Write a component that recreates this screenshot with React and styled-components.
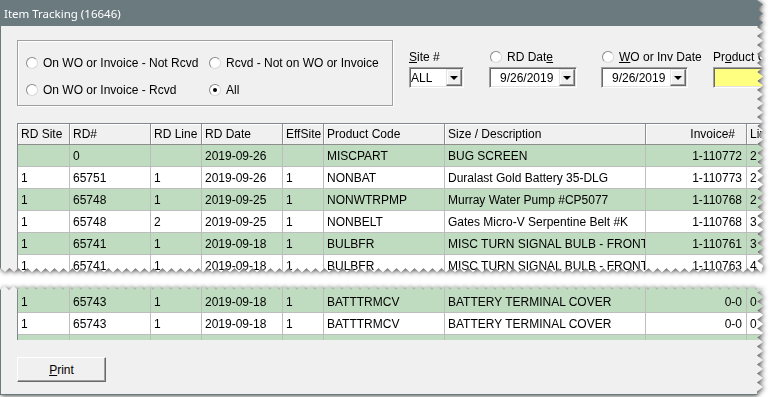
import React from 'react';
import styled, { createGlobalStyle } from 'styled-components';

const Global = createGlobalStyle`
  html, body { margin: 0; padding: 0; background: #ffffff; }
  body {
    overflow: hidden;
    font-family: "Liberation Sans", Arial, sans-serif;
    font-size: 12px;
    color: #000;
  }
`;

const FRAME = '#6b7a7f';
const R_IN = 757;
const R_OUT = 763;

function topClip(h) {
  const pts = [`0px 0px`];
  let i = 0;
  for (let y = 0; y <= h - 4; y += 4.5, i++) pts.push(`${i % 2 ? R_OUT : R_IN}px ${y}px`);
  let j = 0;
  for (let x = 761; x >= 0; x -= 4.5, j++) pts.push(`${x}px ${j % 2 ? h - 5 : h - 1}px`);
  pts.push(`0px ${h - 3}px`);
  return `polygon(${pts.join(',')})`;
}

function bottomClip(h) {
  const pts = [`0px 2px`];
  let j = 0;
  for (let x = 0; x <= 758; x += 4.5, j++) pts.push(`${x}px ${j % 2 ? 0 : 4}px`);
  let i = 0;
  for (let y = 2; y <= h; y += 4.5, i++) pts.push(`${i % 2 ? R_IN : R_OUT}px ${y}px`);
  pts.push(`${R_IN}px ${h}px`);
  pts.push(`0px ${h}px`);
  return `polygon(${pts.join(',')})`;
}

const TOP_H = 273;
const BOTTOM_H = 109;

const Stage = styled.div`
  width: 770px;
  height: 397px;
  display: flex;
  flex-direction: column;
  filter: drop-shadow(1px 1px 2.5px rgba(0, 0, 0, 0.7));
`;

const TopPiece = styled.div`
  height: ${TOP_H}px;
  flex: none;
  overflow: hidden;
  clip-path: ${topClip(TOP_H)};
  display: flex;
  flex-direction: column;
  width: 780px;
`;

const Tear = styled.div`
  height: 13px;
  flex: none;
`;

const BottomPiece = styled.div`
  height: ${BOTTOM_H}px;
  flex: none;
  overflow: hidden;
  clip-path: ${bottomClip(BOTTOM_H)};
  width: 780px;
  box-sizing: border-box;
  background: #f0f0f0;
  border-left: 1px solid ${FRAME};
  border-bottom: 1px solid ${FRAME};
  padding-left: 16px;
  display: flex;
  flex-direction: column;
`;

const TitleBar = styled.div`
  height: 26px;
  flex: none;
  background: ${FRAME};
  color: #fff;
  font-family: "Noto Sans", "Liberation Sans", sans-serif;
  font-size: 11.5px;
  display: flex;
  align-items: center;
  padding-left: 4px;
`;

const Body = styled.div`
  flex: 1;
  background: #f0f0f0;
  border-left: 1px solid ${FRAME};
  padding: 14px 0 0 16px;
  display: flex;
  flex-direction: column;
`;

const FilterRow = styled.div`
  display: flex;
  align-items: flex-start;
  height: 66px;
  flex: none;
`;

const GroupBox = styled.div`
  width: 376px;
  height: 66px;
  flex: none;
  box-sizing: border-box;
  border: 1px solid #a0a0a0;
  box-shadow: inset 1px 1px 0 #fff, 1px 1px 0 #fff;
  padding: 8px 0 0 8px;
  display: grid;
  grid-template-columns: 183px auto;
  grid-auto-rows: 27px;
`;

const RadioItem = styled.label`
  display: flex;
  align-items: center;
  gap: 5px;
  white-space: nowrap;
`;

const RadioDot = styled.span`
  width: 12px;
  height: 12px;
  box-sizing: border-box;
  border-radius: 50%;
  background: #fff;
  border: 1px solid;
  border-color: #8a8a8a #d8d8d8 #d8d8d8 #8a8a8a;
  display: inline-flex;
  align-items: center;
  justify-content: center;
  flex: none;
  margin-left: ${p => p.$inset || 0}px;
  &::after {
    content: '';
    width: 4px;
    height: 4px;
    border-radius: 50%;
    background: ${p => (p.$on ? '#000' : 'transparent')};
  }
`;

const Field = styled.div`
  display: flex;
  flex-direction: column;
  flex: none;
  margin-left: ${p => p.$gap}px;
  margin-top: 10px;
  width: ${p => p.$w}px;
`;

const FieldLabel = styled.div`
  height: 14px;
  line-height: 14px;
  display: flex;
  align-items: center;
  gap: 5px;
  white-space: nowrap;
`;

const Combo = styled.div`
  margin-top: 3px;
  height: 21px;
  box-sizing: border-box;
  background: ${p => p.$bg || '#fff'};
  border: 1px solid;
  border-color: #a0a0a0 #fff #fff #a0a0a0;
  box-shadow: inset 1px 1px 0 #696969, inset -1px -1px 0 #e3e3e3;
  display: flex;
  align-items: center;
  padding: 1px 1px 1px ${p => p.$pad}px;
  width: ${p => p.$w}px;
  flex: none;
`;

const ComboText = styled.span`
  flex: 1;
  white-space: nowrap;
`;

const DropButton = styled.span`
  width: 16px;
  height: 17px;
  box-sizing: border-box;
  background: #f0f0f0;
  border: 1px solid;
  border-color: #e3e3e3 #696969 #696969 #e3e3e3;
  box-shadow: inset -1px -1px 0 #a0a0a0, inset 1px 1px 0 #fff;
  display: flex;
  align-items: center;
  justify-content: center;
  flex: none;
  &::after {
    content: '';
    border-left: 4px solid transparent;
    border-right: 4px solid transparent;
    border-top: 4px solid #000;
    margin-top: 1px;
  }
`;

const COLS = '52px 81px 51px 81px 41px 121px 201px 101px 80px';

const GridFrame = styled.div`
  margin-top: 17px;
  border-left: 1px solid #828790;
  border-top: 1px solid #828790;
  width: 830px;
  flex: none;
`;

const Row = styled.div`
  display: grid;
  grid-template-columns: ${COLS};
`;

const HeadCell = styled.div`
  height: 21px;
  box-sizing: border-box;
  background: #f0f0f0;
  border-right: 1px solid #8e8e8e;
  border-bottom: 1px solid #8e8e8e;
  box-shadow: inset 1px 1px 0 #fff;
  display: flex;
  align-items: center;
  justify-content: ${p => (p.$right ? 'flex-end' : 'flex-start')};
  padding: 0 ${p => (p.$right ? 11 : 0)}px 0 3px;
  white-space: nowrap;
  overflow: hidden;
`;

const Cell = styled.div`
  height: ${p => 22 + (p.$lead || 0)}px;
  box-sizing: border-box;
  background: ${p => (p.$green ? '#c0dcc0' : '#ffffff')};
  border-right: 1px solid #bdbdbd;
  border-bottom: 1px solid #bdbdbd;
  display: flex;
  align-items: center;
  justify-content: ${p => (p.$right ? 'flex-end' : 'flex-start')};
  padding: ${p => p.$lead || 0}px ${p => (p.$right ? 4 : 0)}px 0 3px;
  white-space: nowrap;
  overflow: hidden;
`;

const LowerGrid = styled.div`
  height: 54px;
  overflow: hidden;
  border-left: 1px solid #828790;
  width: 830px;
  flex: none;
`;

const PrintButton = styled.button`
  margin-top: 17px;
  width: 89px;
  height: 25px;
  flex: none;
  box-sizing: border-box;
  background: #f0f0f0;
  border: 1px solid;
  border-color: #fff #696969 #696969 #fff;
  box-shadow: inset -1px -1px 0 #a0a0a0;
  font-family: "Liberation Sans", Arial, sans-serif;
  font-size: 12px;
  color: #000;
  padding: 0;
`;

const HEAD = ['RD Site', 'RD#', 'RD Line', 'RD Date', 'EffSite', 'Product Code', 'Size / Description', 'Invoice#', 'Line'];

const TOP_ROWS = [
  ['', '0', '', '2019-09-26', '', 'MISCPART', 'BUG SCREEN', '1-110772', '2'],
  ['1', '65751', '1', '2019-09-26', '1', 'NONBAT', 'Duralast Gold Battery 35-DLG', '1-110773', '2'],
  ['1', '65748', '1', '2019-09-25', '1', 'NONWTRPMP', 'Murray Water Pump #CP5077', '1-110768', '2'],
  ['1', '65748', '2', '2019-09-25', '1', 'NONBELT', 'Gates Micro-V Serpentine Belt #K', '1-110768', '3'],
  ['1', '65741', '1', '2019-09-18', '1', 'BULBFR', 'MISC TURN SIGNAL BULB - FRONT', '1-110761', '3'],
  ['1', '65741', '1', '2019-09-18', '1', 'BULBFR', 'MISC TURN SIGNAL BULB - FRONT', '1-110763', '4'],
];

const BOTTOM_ROWS = [
  ['1', '65743', '1', '2019-09-18', '1', 'BATTTRMCV', 'BATTERY TERMINAL COVER', '0-0', '0'],
  ['1', '65743', '1', '2019-09-18', '1', 'BATTTRMCV', 'BATTERY TERMINAL COVER', '0-0', '0'],
  ['', '', '', '', '', '', '', '', ''],
];

function DataRow({ cells, green, lead }) {
  return (
    <Row>
      {cells.map((c, i) => (
        <Cell key={i} $green={green} $right={i === 7} $lead={lead}>{c}</Cell>
      ))}
    </Row>
  );
}

export default function App() {
  return (
    <>
      <Global />
      <Stage>
        <TopPiece>
          <TitleBar>Item Tracking (16646)</TitleBar>
          <Body>
            <FilterRow>
              <GroupBox>
                <RadioItem><RadioDot />On WO or Invoice - Not Rcvd</RadioItem>
                <RadioItem><RadioDot />Rcvd - Not on WO or Invoice</RadioItem>
                <RadioItem><RadioDot />On WO or Invoice - Rcvd</RadioItem>
                <RadioItem><RadioDot $on />All</RadioItem>
              </GroupBox>
              <Field $gap={16} $w={55}>
                <FieldLabel><span><u>S</u>ite #</span></FieldLabel>
                <Combo $w={55} $pad={1}>
                  <ComboText>ALL</ComboText>
                  <DropButton />
                </Combo>
              </Field>
              <Field $gap={25} $w={88}>
                <FieldLabel><RadioDot $inset={1} /><span>RD Dat<u>e</u></span></FieldLabel>
                <Combo $w={88} $pad={10}>
                  <ComboText>9/26/2019</ComboText>
                  <DropButton />
                </Combo>
              </Field>
              <Field $gap={24} $w={87}>
                <FieldLabel><RadioDot $inset={1} /><span><u>W</u>O or Inv Date</span></FieldLabel>
                <Combo $w={87} $pad={10}>
                  <ComboText>9/26/2019</ComboText>
                  <DropButton />
                </Combo>
              </Field>
              <Field $gap={25} $w={100}>
                <FieldLabel><span>Pr<u>o</u>duct Code</span></FieldLabel>
                <Combo $w={100} $pad={2} $bg="#ffff80" />
              </Field>
            </FilterRow>
            <GridFrame>
              <Row>
                {HEAD.map((h, i) => (
                  <HeadCell key={h} $right={i === 7}>{h}</HeadCell>
                ))}
              </Row>
              {TOP_ROWS.map((r, i) => (
                <DataRow key={i} cells={r} green={i % 2 === 0} />
              ))}
            </GridFrame>
          </Body>
        </TopPiece>
        <Tear />
        <BottomPiece>
          <LowerGrid>
            {BOTTOM_ROWS.map((r, i) => (
              <DataRow key={i} cells={r} green={i % 2 === 0} lead={i === 0 ? 5 : 0} />
            ))}
          </LowerGrid>
          <PrintButton><u>P</u>rint</PrintButton>
        </BottomPiece>
      </Stage>
    </>
  );
}
